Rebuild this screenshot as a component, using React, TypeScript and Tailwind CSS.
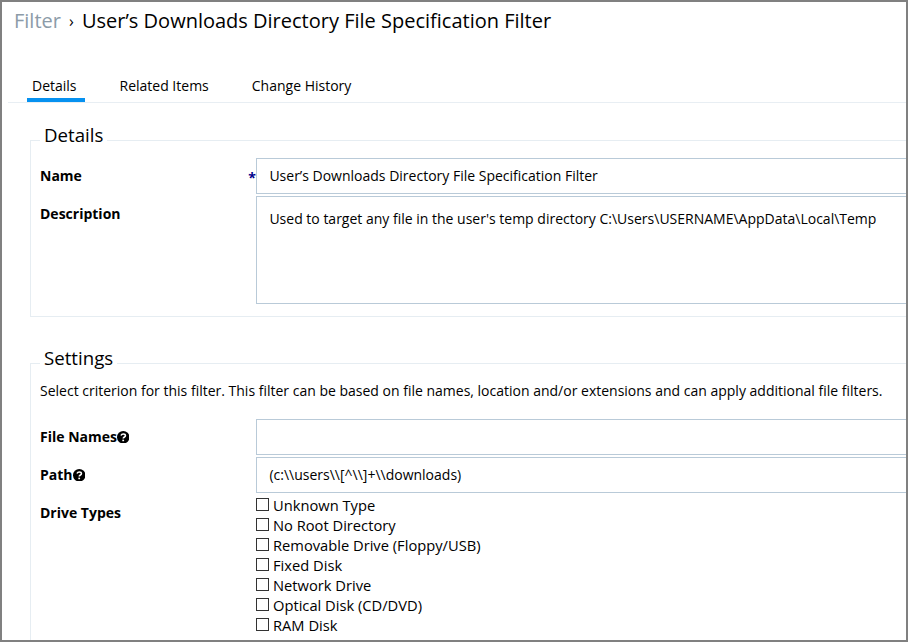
import type { ReactNode } from "react";

const driveTypes = [
  "Unknown Type",
  "No Root Directory",
  "Removable Drive (Floppy/USB)",
  "Fixed Disk",
  "Network Drive",
  "Optical Disk (CD/DVD)",
  "RAM Disk",
];

function HelpIcon() {
  return (
    <svg className="size-[12.5px] shrink-0" viewBox="0 0 12 12" fill="none" aria-label="Help">
      <circle cx="6" cy="6" r="6" fill="#000" />
      <path d="M3.800 4.300C4.300 3.300 5.100 2.900 6 2.900c1.200 0 2.100.700 2.100 1.600C8.100 5.800 6 5.700 6 7.300" stroke="#fff" strokeWidth="1.500" />
      <path d="M5.100 8.300h1.700v1.500H5.100z" fill="#fff" />
    </svg>
  );
}

function Row({
  label,
  help = false,
  required = false,
  children,
}: {
  label: string;
  help?: boolean;
  required?: boolean;
  children: ReactNode;
}) {
  return (
    <div className="flex">
      <div className="flex h-9 w-[216px] shrink-0 items-center font-bold">
        <span>{label}</span>
        {help && <HelpIcon />}
        {required && <span className="ml-auto pt-1 leading-4 text-[#00008b]">*</span>}
      </div>
      <div className="min-w-0 flex-1">{children}</div>
    </div>
  );
}

function Field({ value }: { value: string }) {
  return (
    <div className="flex h-9 items-center border border-r-0 border-[#b9cad8] pl-[12.4px]">{value}</div>
  );
}

function Legend({ children }: { children: string }) {
  return (
    <legend className="px-1 pb-3 text-[18.67px] leading-[19px]">{children}</legend>
  );
}

export default function App() {
  return (
    <div className="flex h-[642px] w-[908px] flex-col overflow-hidden border-2 border-[#808080] bg-white font-['Open_Sans',sans-serif] text-sm text-black">
      <header className="flex h-[38px] shrink-0 items-center pl-3 text-xl">
        <span className="text-[#8c9ba8]">Filter</span>
        <span className="w-[21px] text-center text-base">›</span>
        <h1>User’s Downloads Directory File Specification Filter</h1>
      </header>

      <nav className="mt-[31px] ml-1.5 flex h-8 shrink-0 border-b border-[#e8eef3] pl-[19px]">
        <span className="w-[58px] border-b-4 border-[#0691f0] pt-[5px] pl-[5px]">Details</span>
        <span className="ml-[34.5px] pt-[5px]">Related Items</span>
        <span className="ml-[43px] pt-[5px]">Change History</span>
      </nav>

      <fieldset className="mt-[22px] ml-7 h-[192px] shrink-0 border border-r-0 border-[#e6edf2] pl-[9px]">
        <Legend>Details</Legend>
        <div className="flex flex-col gap-0.5 pt-0.5">
          <Row label="Name" required>
            <Field value="User’s Downloads Directory File Specification Filter" />
          </Row>
          <Row label="Description">
            <div className="h-[108px] border border-r-0 border-[#b9cad8] py-3 pl-[12.4px]">
              Used to target any file in the user's temp directory C:\Users\USERNAME\AppData\Local\Temp
            </div>
          </Row>
        </div>
      </fieldset>

      <fieldset className="mt-[31px] ml-7 min-h-0 flex-1 border border-r-0 border-b-0 border-[#e6edf2] pl-[9px]">
        <Legend>Settings</Legend>
        <p className="pt-0.5 leading-5 whitespace-nowrap">
          Select criterion for this filter. This filter can be based on file names, location and/or
          extensions and can apply additional file filters.
        </p>
        <div className="flex flex-col gap-0.5 pt-[18px]">
          <Row label="File Names" help>
            <Field value="" />
          </Row>
          <Row label="Path" help>
            <Field value="(c:\\users\\[^\\]+\\downloads)" />
          </Row>
          <Row label="Drive Types">
            <div className="flex flex-col">
              {driveTypes.map((type) => (
                <label key={type} className="flex h-5 items-center text-[14.7px]">
                  <input
                    type="checkbox"
                    className="mr-1 mb-0.5 size-[13px] appearance-none border border-[#333] bg-white"
                  />
                  {type}
                </label>
              ))}
            </div>
          </Row>
        </div>
      </fieldset>
    </div>
  );
}
